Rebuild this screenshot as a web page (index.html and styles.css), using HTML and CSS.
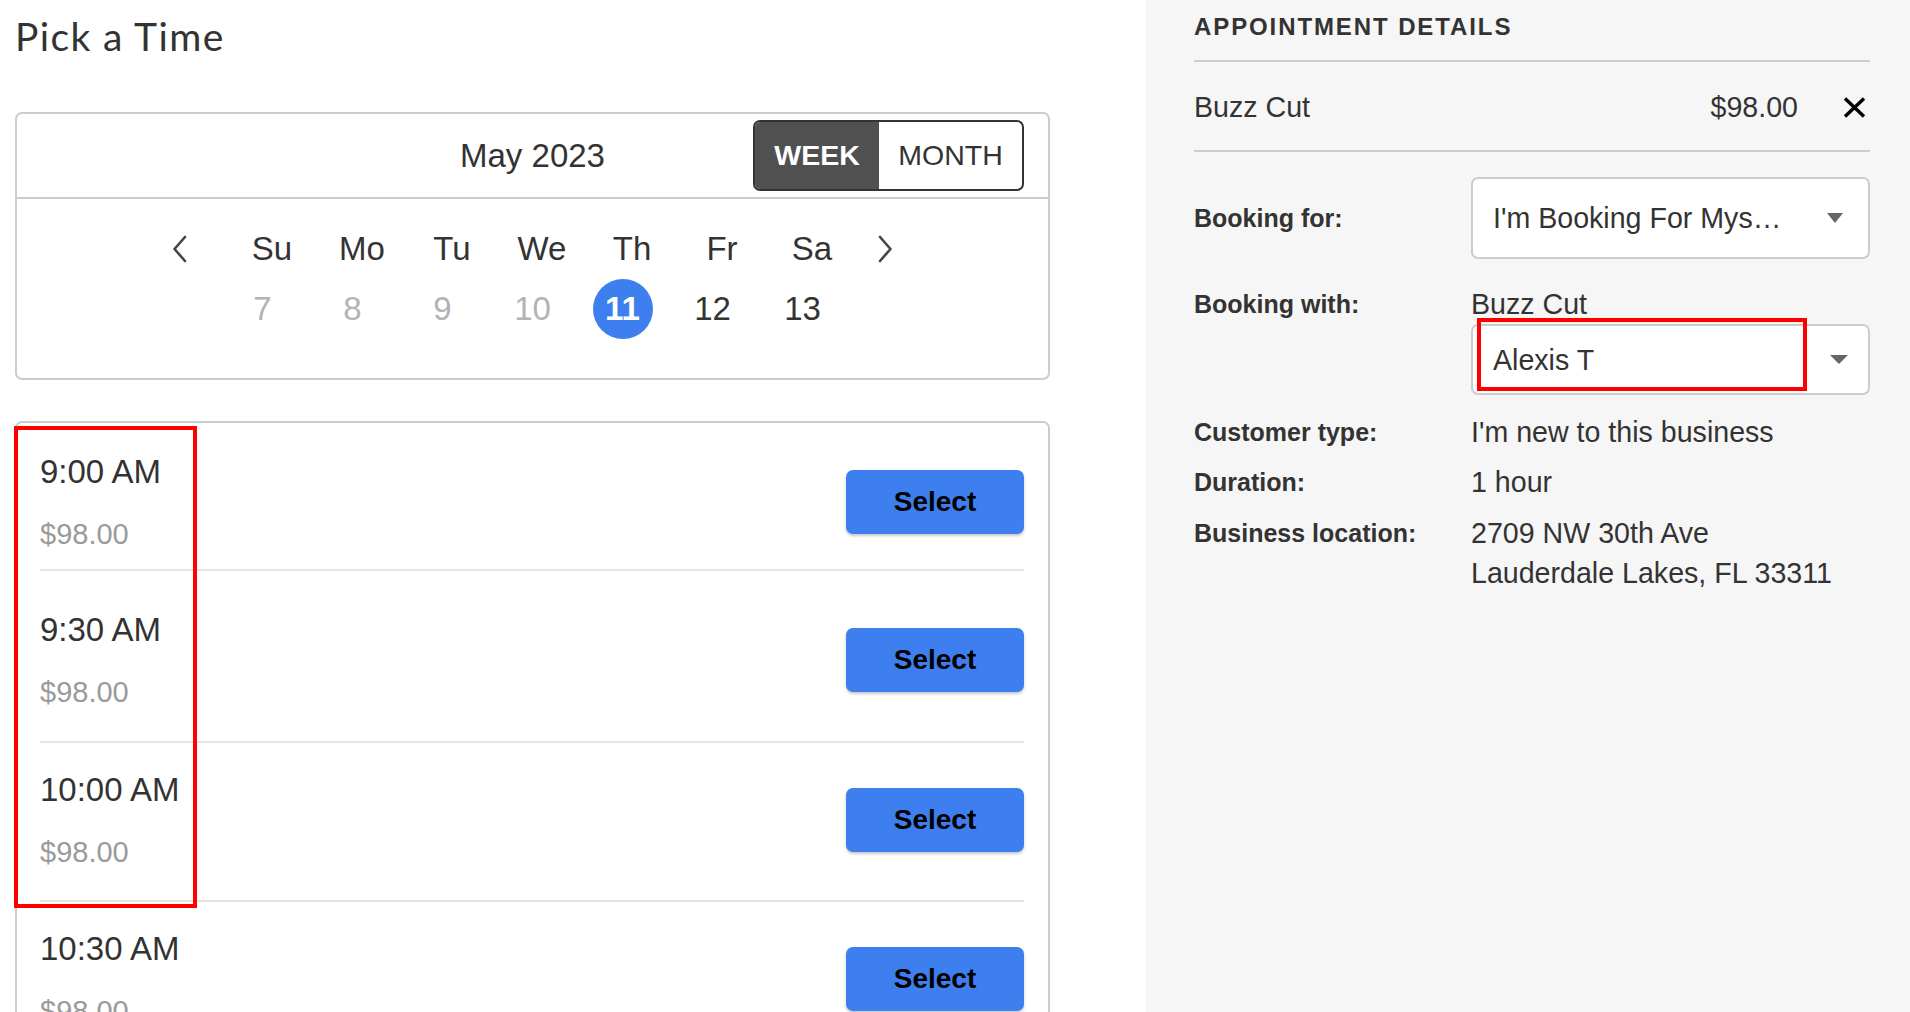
FILE: index.html
```html
<!DOCTYPE html>
<html lang="en">
<head>
<meta charset="utf-8">
<title>Pick a Time</title>
<link rel="stylesheet" href="styles.css">
</head>
<body>
<div class="page">
  <main class="left">
    <h1 class="title">Pick a Time</h1>

    <section class="card cal">
      <div class="cal-head">
        <span class="spacer"></span>
        <div class="month">May 2023</div>
        <div class="toggle">
          <span class="tg tg-week active">WEEK</span>
          <span class="tg tg-month">MONTH</span>
        </div>
      </div>
      <div class="cal-body">
        <div class="week-head">
          <span class="chev chev-prev">
            <svg viewBox="0 0 15 28" width="15" height="28"><polyline points="13,2 2.5,14 13,26" fill="none" stroke="#444" stroke-width="2.6" stroke-linecap="round" stroke-linejoin="round"/></svg>
          </span>
          <div class="days">
            <span>Su</span><span>Mo</span><span>Tu</span><span>We</span><span>Th</span><span>Fr</span><span>Sa</span>
          </div>
          <span class="chev chev-next">
            <svg viewBox="0 0 15 28" width="15" height="28"><polyline points="2,2 12.5,14 2,26" fill="none" stroke="#444" stroke-width="2.6" stroke-linecap="round" stroke-linejoin="round"/></svg>
          </span>
        </div>
        <div class="dates">
          <span class="date past">7</span>
          <span class="date past">8</span>
          <span class="date past">9</span>
          <span class="date past">10</span>
          <span class="date"><span class="today">11</span></span>
          <span class="date">12</span>
          <span class="date">13</span>
        </div>
      </div>
    </section>

    <section class="card slots">
      <div class="slot">
        <div class="slot-info">
          <div class="time">9:00 AM</div>
          <div class="price">$98.00</div>
        </div>
        <button class="select-btn">Select</button>
      </div>
      <div class="slot">
        <div class="slot-info">
          <div class="time">9:30 AM</div>
          <div class="price">$98.00</div>
        </div>
        <button class="select-btn">Select</button>
      </div>
      <div class="slot">
        <div class="slot-info">
          <div class="time">10:00 AM</div>
          <div class="price">$98.00</div>
        </div>
        <button class="select-btn">Select</button>
      </div>
      <div class="slot">
        <div class="slot-info">
          <div class="time">10:30 AM</div>
          <div class="price">$98.00</div>
        </div>
        <button class="select-btn">Select</button>
      </div>
      <div class="annot annot-slots"></div>
    </section>
  </main>

  <aside class="details">
    <h2 class="heading">APPOINTMENT DETAILS</h2>
    <div class="item">
      <span class="item-name">Buzz Cut</span>
      <span class="item-price">$98.00</span>
      <span class="item-remove">
        <svg viewBox="0 0 23 21" width="23" height="21"><path d="M2 1.5 L21 19.5 M21 1.5 L2 19.5" stroke="#000" stroke-width="3.4" fill="none"/></svg>
      </span>
    </div>

    <div class="field field-center">
      <div class="label">Booking for:</div>
      <div class="select select-tall">
        <span>I'm Booking For Mys…</span>
        <span class="caret"></span>
      </div>
    </div>

    <div class="field field-with">
      <div class="label">Booking with:</div>
      <div class="value">
        <div>Buzz Cut</div>
        <div class="select select-short">
          <span>Alexis T</span>
          <span class="caret caret-wide"></span>
          <span class="annot annot-select"></span>
        </div>
      </div>
    </div>

    <div class="field field-customer">
      <div class="label">Customer type:</div>
      <div class="value">I'm new to this business</div>
    </div>
    <div class="field field-duration">
      <div class="label">Duration:</div>
      <div class="value">1 hour</div>
    </div>
    <div class="field field-location">
      <div class="label">Business location:</div>
      <div class="value">2709 NW 30th Ave<br>Lauderdale Lakes, FL 33311</div>
    </div>
  </aside>
</div>
</body>
</html>
```

FILE: styles.css
```css
* { box-sizing: border-box; }

html, body {
  margin: 0;
  padding: 0;
  height: 100%;
  overflow: hidden;
  background: #ffffff;
  font-family: "Liberation Sans", Arial, Helvetica, sans-serif;
  color: #333333;
}

.page {
  display: grid;
  grid-template-columns: 1146px 1fr;
  height: 100vh;
}

/* ---------- left column ---------- */
.left {
  padding: 0 0 0 15px;
  background: #ffffff;
}

.title {
  margin: 0;
  padding-top: 14px;
  font-family: "Lato", "Open Sans", sans-serif;
  font-weight: 400;
  font-size: 39px;
  line-height: 44px;
  letter-spacing: 1.4px;
  color: #333333;
}

.card {
  width: 1035px;
  border: 2px solid #cccccc;
  border-radius: 7px;
  background: #ffffff;
}

.cal {
  margin-top: 54px;
}

.cal-head {
  display: grid;
  grid-template-columns: 1fr auto 1fr;
  align-items: center;
  height: 85px;
  border-bottom: 2px solid #cccccc;
}

.month {
  font-size: 33px;
  line-height: 40px;
  color: #333333;
}

.toggle {
  justify-self: end;
  margin-right: 24px;
  display: flex;
  height: 71px;
  border: 2px solid #333333;
  border-radius: 7px;
  overflow: hidden;
}

.tg {
  display: block;
  text-align: center;
  font-size: 28.5px;
  line-height: 67px;
  color: #333333;
}

.tg-week { width: 124px; }
.tg-month { width: 143px; }

.tg.active {
  background: #505050;
  color: #ffffff;
  font-weight: 700;
}

.cal-body {
  padding: 30px 0 39px;
}

.week-head {
  display: flex;
  justify-content: center;
  align-items: center;
  height: 40px;
}

.chev {
  display: block;
  width: 15px;
  height: 28px;
}
.chev svg { display: block; }
.chev-prev { margin-right: 40px; }
.chev-next { margin-left: 21px; }

.days {
  display: grid;
  grid-template-columns: repeat(7, 90px);
  font-size: 33px;
  line-height: 40px;
  text-align: center;
  color: #333333;
}

.dates {
  display: grid;
  grid-template-columns: repeat(7, 90px);
  width: 630px;
  margin: 10px auto 0;
  font-size: 33px;
  line-height: 60px;
  height: 60px;
  text-align: center;
  color: #333333;
}

.date {
  display: flex;
  justify-content: center;
}

.date.past { color: #b3b3b3; }

.today {
  display: block;
  width: 60px;
  height: 60px;
  border-radius: 50%;
  background: #3e7ff0;
  color: #ffffff;
  font-weight: 700;
}

/* ---------- slots ---------- */
.slots {
  position: relative;
  margin-top: 41px;
  padding: 0 24px 0 23px;
  min-height: 700px;
}

.slot {
  display: flex;
  justify-content: space-between;
  align-items: center;
  padding: 27px 0 30px;
  border-bottom: 2px solid #e4e4e4;
}

.slot:first-child { padding: 29px 0 17px; }
.slot:nth-child(2) { padding: 39px 0 31px; }

.time {
  font-size: 33px;
  line-height: 40px;
  color: #333333;
}

.price {
  margin-top: 24px;
  font-size: 29px;
  line-height: 36px;
  color: #9a9a9a;
}

.select-btn {
  width: 178px;
  height: 64px;
  border: none;
  border-radius: 7px;
  background: #3e7ff0;
  color: #000000;
  font-family: "Liberation Sans", Arial, sans-serif;
  font-weight: 700;
  font-size: 28px;
  box-shadow: 0 2px 3px rgba(0, 0, 0, 0.22);
  padding: 0;
}

/* red annotation boxes (overlays) */
.annot {
  position: absolute;
  border: 4px solid #ff0000;
  pointer-events: none;
}

.annot-slots {
  left: -3px;
  top: 3px;
  width: 183px;
  height: 482px;
}

.annot-select {
  left: 4px;
  top: -8px;
  width: 330px;
  height: 73px;
}

/* ---------- right column ---------- */
.details {
  background: #f6f6f6;
  padding: 12px 40px 0 48px;
  color: #333333;
}

.heading {
  margin: 0;
  padding-bottom: 18px;
  border-bottom: 2px solid #cccccc;
  font-size: 24px;
  line-height: 30px;
  font-weight: 700;
  letter-spacing: 1.9px;
  color: #333333;
}

.item {
  display: flex;
  align-items: center;
  padding: 27px 0 25px;
  border-bottom: 2px solid #cccccc;
  font-size: 28.6px;
  line-height: 36px;
}

.item-name { flex: 1; }

.item-remove {
  display: block;
  width: 23px;
  height: 21px;
  margin-left: 45px;
  margin-right: 4px;
}
.item-remove svg { display: block; }

.field {
  display: grid;
  grid-template-columns: 277px 1fr;
  align-items: start;
  font-size: 28.6px;
  line-height: 40px;
}

.field-center {
  align-items: center;
  margin-top: 25px;
}
.field-with { margin-top: 25px; }
.field-customer { margin-top: 17px; }
.field-duration { margin-top: 10px; }
.field-location { margin-top: 11px; }

.label {
  font-size: 25px;
  line-height: 40px;
  font-weight: 700;
  color: #333333;
}

.select {
  position: relative;
  display: flex;
  align-items: center;
  justify-content: space-between;
  background: #ffffff;
  border: 2px solid #cccccc;
  border-radius: 7px;
  padding: 0 25px 0 20px;
  font-size: 28.6px;
  line-height: 36px;
  color: #333333;
}

.select-tall { height: 82px; padding-right: 25px; }
.select-short { height: 71px; padding-right: 20px; }

.caret {
  width: 0;
  height: 0;
  border-left: 8.5px solid transparent;
  border-right: 8.5px solid transparent;
  border-top: 10px solid #666666;
}

.caret-wide {
  border-left-width: 9.5px;
  border-right-width: 9.5px;
  border-top-width: 9px;
}
```
